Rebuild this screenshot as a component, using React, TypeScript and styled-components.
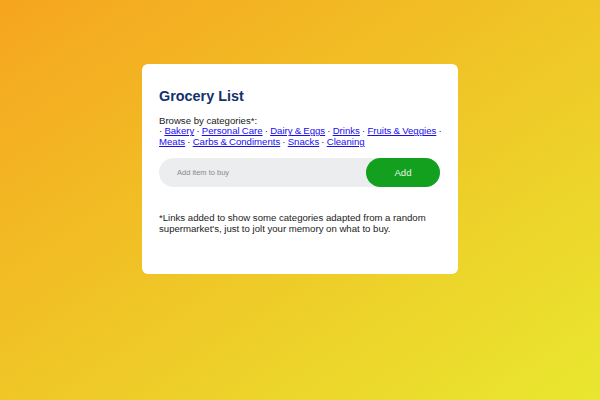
import * as React from 'react'
import styled, {createGlobalStyle} from 'styled-components'

const Global = createGlobalStyle`
  html, body {
    margin: 0;
    padding: 0;
  }
  body {
    font-family: "Liberation Sans", Arial, sans-serif;
    background: linear-gradient(to bottom right, #f6a51f, #e9e72f);
    min-height: 100vh;
  }
`

const Page = styled.div`
  width: 600px;
  height: 400px;
  display: flex;
  justify-content: center;
  align-items: flex-start;
  padding-top: 64px;
  box-sizing: border-box;
`

const Card = styled.div`
  width: 316px;
  height: 210px;
  box-sizing: border-box;
  background: #fff;
  border-radius: 6px;
  padding: 24px 18px 17px 17px;
  display: flex;
  flex-direction: column;
`

const Title = styled.h1`
  margin: 0 0 11px;
  font-size: 14.4px;
  line-height: 16.5px;
  font-weight: 700;
  color: #13316b;
`

const Categories = styled.p`
  margin: 0 -6px 0 0;
  font-size: 9.6px;
  line-height: 10.8px;
  color: #222;

  a {
    color: #1a0dee;
    text-decoration: underline;
  }
`

const Line = styled.span`
  white-space: nowrap;
  word-spacing: -0.5px;
`

const Form = styled.form`
  display: flex;
  margin-top: 10px;
  height: 29px;
  background: #ecedef;
  border-radius: 15px;
`

const Input = styled.input`
  flex: 1;
  min-width: 0;
  border: none;
  background: transparent;
  outline: none;
  padding: 0 0 0 18px;
  font-family: inherit;
  font-size: 7.5px;
  color: #333;

  &::placeholder {
    color: #8a8a8a;
  }
`

const AddButton = styled.button`
  width: 74px;
  height: 29px;
  border: none;
  border-radius: 15px;
  background: #13a01f;
  color: #e6f3e6;
  font-family: inherit;
  font-size: 9.6px;
  padding: 0;
`

const Note = styled.p`
  margin: 26px 0 0;
  font-size: 9.6px;
  line-height: 10.8px;
  color: #222;
`

const rows = [
    ['Bakery', 'Personal Care', 'Dairy & Eggs', 'Drinks', 'Fruits & Veggies'],
    ['Meats', 'Carbs & Condiments', 'Snacks', 'Cleaning'],
]

export default function App() {
    return (
        <>
            <Global/>
            <Page>
                <Card>
                    <Title>Grocery List</Title>
                    <Categories>
                        Browse by categories*:
                        <br/>
                        <Line>
                            {rows[0].map(c => (
                                <React.Fragment key={c}>
                                    {'· '}<a href="#">{c}</a>{' '}
                                </React.Fragment>
                            ))}
                            ·
                        </Line>
                        <br/>
                        <Line>
                            {rows[1].map((c, i) => (
                                <React.Fragment key={c}>
                                    {i > 0 && ' · '}<a href="#">{c}</a>
                                </React.Fragment>
                            ))}
                        </Line>
                    </Categories>
                    <Form onSubmit={e => e.preventDefault()}>
                        <Input placeholder="Add item to buy"/>
                        <AddButton type="submit">Add</AddButton>
                    </Form>
                    <Note>
                        *Links added to show some categories adapted from a random supermarket's, just to jolt your memory on what to buy.
                    </Note>
                </Card>
            </Page>
        </>
    )
}
